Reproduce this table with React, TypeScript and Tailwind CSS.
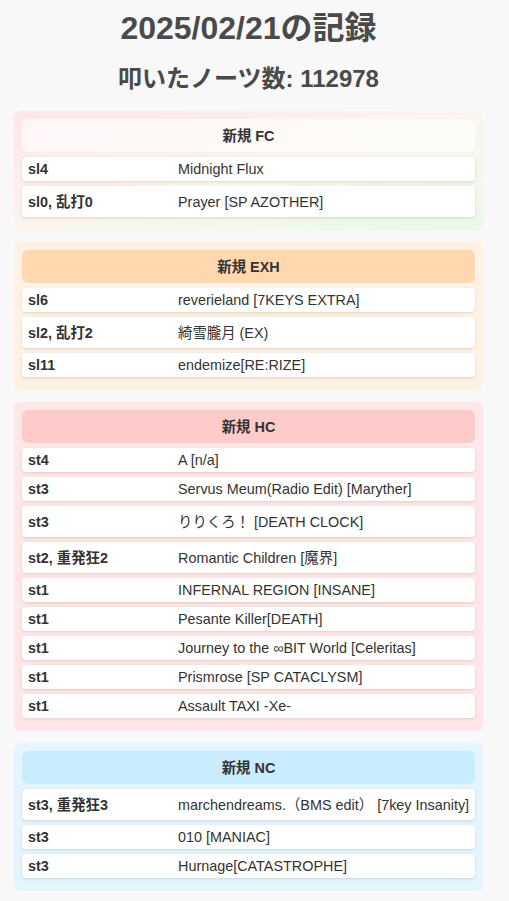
const sections = [
  {
    title: "新規 FC",
    box: "bg-gradient-to-br from-[#fde6e9] via-[#fbf5ee] to-[#e9f9ea]",
    head: "bg-white/60",
    rows: [
      ["sl4", "Midnight Flux"],
      ["sl0, 乱打0", "Prayer [SP AZOTHER]"],
    ],
  },
  {
    title: "新規 EXH",
    box: "bg-[#fff1e3]",
    head: "bg-[#ffd8b0]",
    rows: [
      ["sl6", "reverieland [7KEYS EXTRA]"],
      ["sl2, 乱打2", "綺雪朧月 (EX)"],
      ["sl11", "endemize[RE:RIZE]"],
    ],
  },
  {
    title: "新規 HC",
    box: "bg-[#ffe7e7]",
    head: "bg-[#ffcaca]",
    rows: [
      ["st4", "A [n/a]"],
      ["st3", "Servus Meum(Radio Edit) [Maryther]"],
      ["st3", "りりくろ！ [DEATH CLOCK]"],
      ["st2, 重発狂2", "Romantic Children [魔界]"],
      ["st1", "INFERNAL REGION [INSANE]"],
      ["st1", "Pesante Killer[DEATH]"],
      ["st1", "Journey to the ∞BIT World [Celeritas]"],
      ["st1", "Prismrose [SP CATACLYSM]"],
      ["st1", "Assault TAXI -Xe-"],
    ],
  },
  {
    title: "新規 NC",
    box: "bg-[#e4f5fe]",
    head: "bg-[#c9ecfe]",
    rows: [
      ["st3, 重発狂3", "marchendreams.（BMS edit） [7key Insanity]"],
      ["st3", "010 [MANIAC]"],
      ["st3", "Hurnage[CATASTROPHE]"],
    ],
  },
];

// rows holding CJK text sit a little taller
const cjk = /[\u3000-\u9fff\uff00-\uffef]/;

const App = () => (
  <div className="min-h-screen bg-[#f8f8f8] text-[#333] leading-[normal] font-['Liberation_Sans','Noto_Sans_CJK_JP',sans-serif]">
    <div className="w-[469px] ml-[14px] pb-4">
      <h1 className="pt-[2px] text-[32px] font-bold text-center text-[#4a4a4a]">2025/02/21の記録</h1>
      <h2 className="mt-[11px] mb-[17px] text-[24px] font-bold text-center text-[#4a4a4a]">
        叩いたノーツ数: 112978
      </h2>
      {sections.map((s) => (
        <section key={s.title} className={`${s.box} rounded-[6px] p-2 mb-[12px]`}>
          <div
            className={`${s.head} rounded-[6px] h-[33px] flex items-center justify-center mb-[5px] text-[14.4px] leading-[16px] font-bold`}
          >
            {s.title}
          </div>
          {s.rows.map(([lv, name], i) => (
            <div
              key={i}
              className={`grid grid-cols-[150px_1fr] items-center bg-white rounded-[4px] px-[6px] mb-[5px] text-[14.4px] leading-[16px] shadow-[0_1px_3px_rgba(0,0,0,0.12)] ${
                cjk.test(lv + name) ? "h-[31px]" : "h-[24px]"
              }`}
            >
              <span className="font-bold">{lv}</span>
              <span className="whitespace-nowrap">{name}</span>
            </div>
          ))}
        </section>
      ))}
    </div>
  </div>
);

export default App;
